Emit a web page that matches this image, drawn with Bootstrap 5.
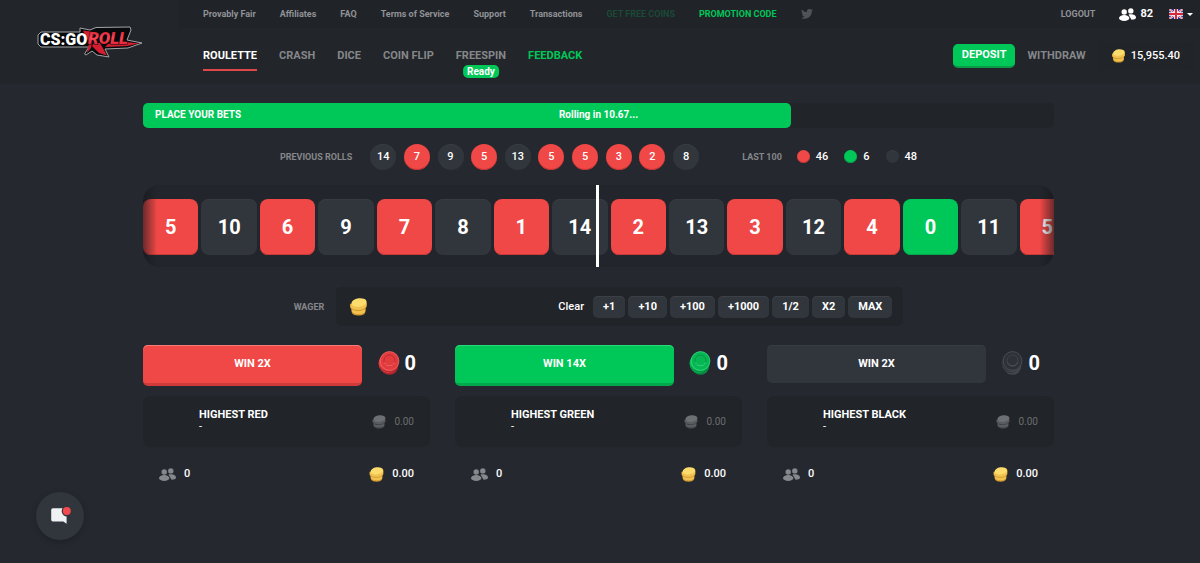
<!DOCTYPE html>
<html lang="en">
<head>
<meta charset="utf-8">
<meta name="viewport" content="width=device-width, initial-scale=1">
<title>CS:GO Roll - Roulette</title>
<link href="https://cdn.jsdelivr.net/npm/bootstrap@5.3.0/dist/css/bootstrap.min.css" rel="stylesheet">
<style>
:root { --red: #ef4846; --red-edge: #c23434; --green: #00c858; --green-edge: #0a9a48; --slate: #31363c; --panel: #212428; --muted: #909296; }
body { font-family: Roboto, "Liberation Sans", sans-serif; font-size: 11px; line-height: 16px; color: #fff; background: #25282f; min-height: 100vh; }
a { color: inherit; text-decoration: none; }
svg { display: block; flex: none; }
.site-header { background: #222529; height: 84px; }
.logo-box { width: 178px; padding-left: 36px; padding-top: 23px; }
.top-links { background: #202328; height: 28px; padding: 0 7px 0 25px; font-size: 9px; font-weight: 700; color: var(--muted); }
.top-row { gap: 24px; }
.game-row { gap: 22px; }
.faded { color: #1a4a36; }
.promo { color: var(--green); }
.online { font-size: 11px; }
.main-links { height: 56px; padding: 0 6px 0 25px; font-weight: 700; color: #85878a; }
.main-links .current { color: #fff; }
.main-links .current::after { content: ""; position: absolute; left: 0; right: 0; top: 21px; height: 2px; background: #e0474a; }
.ready { top: 17px; left: 50%; transform: translateX(-50%); background: var(--green); color: #fff; border-radius: 5px; font-size: 10px; line-height: 13px; padding: 0 4px; font-weight: 700; }
.deposit { background: var(--green); border: 0; border-bottom: 2px solid var(--green-edge); border-radius: 5px; color: #fff; font-size: 11px; font-weight: 700; line-height: 22px; padding: 0 9px; }
.withdraw { margin: 0 12px; }
.balance { background: var(--panel); border-radius: 4px; padding: 0 14px; height: 28px; gap: 6px; font-weight: 500; color: #fff; }
.lang { border: 0; background: none; padding: 0; color: #fff; gap: 4px; }
.caret { border: 3px solid transparent; border-top-color: #fff; border-bottom: 0; }
main { padding: 19px 146px 24px 143px; }
.timer { height: 25px; border-radius: 5px; background: var(--panel); font-size: 10px; font-weight: 700; }
.timer-fill { height: 100%; border-radius: 5px; background: var(--green); }
.timer-text { inset: 0; line-height: 24px; }
.cap { font-size: 9px; font-weight: 700; color: #85878a; }
.history { margin-top: 15px; height: 27px; }
.rolls { width: 329px; margin: 0 43px 0 18px; }
.ball { width: 26px; height: 26px; line-height: 26px; border-radius: 50%; text-align: center; font-size: 11px; font-weight: 500; }
.dot { width: 13px; height: 13px; border-radius: 50%; }
.bg-r { background: var(--red); box-shadow: inset 0 -1px var(--red-edge); }
.bg-g { background: var(--green); box-shadow: inset 0 -1px var(--green-edge); }
.bg-k { background: var(--slate); box-shadow: inset 0 1px #373c42; }
.totals { gap: 16px; font-weight: 500; margin-left: 15px; }
.totals span { gap: 6px; }
.wheel { margin-top: 15px; height: 82px; }
.wheel-window { height: 100%; border-radius: 16px; background: #22252b; padding: 14px 0; overflow: hidden; }
.wheel-window::after { content: ""; position: absolute; inset: 0; border-radius: 16px; background: linear-gradient(90deg, rgba(20,22,26,.6), transparent 14px, transparent calc(100% - 14px), rgba(20,22,26,.6)); }
.tiles { gap: 3px; margin-right: -21px; height: 56px; }
.tile { flex: 1 1 0; border-radius: 8px; font-size: 20px; font-weight: 700; }
.tile.bg-r { box-shadow: inset 0 -1px #c93a39; }
.tile.bg-g { box-shadow: inset 0 -1px #03a64b; }
.needle { left: 50%; top: 0; bottom: 0; width: 3px; margin-left: -3px; background: #fff; }
.wager { margin-top: 20px; gap: 12px; }
.wager-box { width: 567px; height: 39px; background: var(--panel); border-radius: 5px; padding: 0 11px 0 14px; gap: 3px; }
.wager-box input { min-width: 0; flex: 1 1 0; background: none; border: 0; color: #fff; outline: 0; }
.wager-box button { border: 0; border-radius: 5px; background: var(--slate); box-shadow: inset 0 1px #3b4046; color: #fff; font-size: 11px; font-weight: 700; line-height: 22px; padding: 0 10px; }
.wager-box .clear { background: none; box-shadow: none; font-weight: 500; padding: 0; margin-right: 6px; }
.bets { --bs-gutter-x: 25px; margin-top: 19px; }
.bet-head { height: 41px; }
.bet-head button { width: 219px; border: 0; border-radius: 5px; color: #fff; font-weight: 700; font-size: 11px; line-height: 38px; padding: 0; }
.bet-head .bg-r { border-bottom: 3px solid #cf3b3b; box-shadow: inset 0 1px #f77b76; }
.bet-head .bg-g { border-bottom: 3px solid #03a84c; box-shadow: inset 0 1px #2ada7a; }
.chips { padding: 0 14px 6px 0; gap: 5px; font-size: 20px; font-weight: 700; }
.highest { margin-top: 10px; height: 51px; background: var(--panel); border-radius: 8px; padding: 0 16px 0 56px; }
.highest h2 { font-size: 11px; line-height: 13px; font-weight: 700; margin: 0; }
.highest p { line-height: 11px; margin: 0; }
.highest-name { padding-top: 12px; }
.dim { color: #6a6d70; font-size: 10px; gap: 8px; }
.sums { margin-top: 18px; padding: 0 16px; height: 18px; font-weight: 500; }
.sums span { gap: 8px; }
.chat { left: 36px; bottom: 23px; width: 48px; height: 48px; border: 0; border-radius: 50%; background: var(--slate); box-shadow: 0 2px 6px rgba(0,0,0,.2); padding: 0; }
.gold { --c1: #fbdc6c; --c2: #f2c24e; --c3: #cf9730; }
.grey { --c1: #6d7073; --c2: #595c60; --c3: #404347; }
.chip-r { --c1: #f66a68; --c2: #e23c3f; --c3: #b0262d; }
.chip-g { --c1: #35de83; --c2: #06b854; --c3: #068840; }
.chip-k { --c1: #50555b; --c2: #2e3238; --c3: #43484e; }
</style>
</head>
<body>
<svg width="0" height="0" class="position-absolute" aria-hidden="true">
  <defs>
    <symbol id="coins" viewBox="0 0 16 17">
      <path d="M1.500 10v3c0 2 2.600 3.600 6.500 3.600s6.500-1.600 6.500-3.600v-3z" fill="var(--c3)"/>
      <path d="M1.500 9v3.300C2 14 4.500 15.300 8 15.300s6-1.300 6.500-3V9z" fill="var(--c2)"/>
      <path d="M.3 6v3c.6 1.900 3.500 3.200 7.200 3.200 3.900 0 7-1.200 8-3.700V4.500z" fill="var(--c3)"/>
      <path d="M.3 5.500v2.800c.6 1.800 3.500 3 7.200 3 3.900 0 7-1.200 8.200-3.700V4z" fill="var(--c2)"/>
      <ellipse cx="8.500" cy="4.300" rx="7.200" ry="4" fill="var(--c1)" transform="rotate(-8 8.500 4.300)"/>
    </symbol>
    <symbol id="chip" viewBox="0 0 22 24">
      <circle cx="11.500" cy="15" r="8.800" fill="var(--c3)"/>
      <circle cx="10" cy="12.500" r="9.500" fill="var(--c2)"/>
      <path d="M1.500 15.500c3 6 13 7 18 1" fill="none" stroke="var(--c3)"/>
      <circle cx="11.500" cy="10" r="9.400" fill="var(--c2)" stroke="var(--c1)" stroke-width=".8"/>
      <circle cx="11.500" cy="9.500" r="5.500" fill="none" stroke="var(--c3)" stroke-width=".8"/>
      <path d="M6.500 11.500c1.500 4.500 8.500 4.500 10 0" fill="none" stroke="var(--c1)"/>
    </symbol>
    <symbol id="people" viewBox="0 0 17 13">
      <circle cx="11.800" cy="2.900" r="2.700"/><path d="M9.500 6.500c3-1 7.500 0 7.500 3 0 1.800-2 2.200-4.500 2.200z"/>
      <circle cx="5.200" cy="4" r="2.700"/><ellipse cx="5.200" cy="10" rx="5.200" ry="3"/>
    </symbol>
  </defs>
</svg>

<header class="site-header d-flex">
  <a class="logo-box flex-shrink-0" href="#" aria-label="CS:GO Roll">
    <svg width="108" height="38" viewBox="0 0 108 38">
      <defs><linearGradient id="blade" x1="0" y1="0" x2="0" y2="1"><stop offset="0" stop-color="#c9192a"/><stop offset=".5" stop-color="#fb4456"/><stop offset="1" stop-color="#cf1625"/></linearGradient></defs>
      <path d="M5 9H44V5L54 7L60 4.500L94 4L95 7L91 17L106 20L92 25L69 26L73 34L61 32L56 28L50 32L48.500 31L53 24L5 24L2 21V12Z" fill="#08090b" stroke="#a2a5a8" stroke-linejoin="round"/>
      <path d="M47 7.500L58 9L55 25L51 30L53 20ZM58 20L64 20L71 32.500L63 30L56 23ZM86 18.500L103 20.500L91 23L69 24L72 21Z" fill="#d31d30"/>
      <text x="4" y="22" font-family="Roboto, sans-serif" font-size="16" font-weight="900" fill="#fff">CS:GO</text>
      <text x="52" y="21" font-family="Roboto, sans-serif" font-size="17" font-weight="900" font-style="italic" fill="url(#blade)" stroke="#08090b" stroke-width="1" paint-order="stroke">ROLL</text>
    </svg>
  </a>
  <div class="flex-grow-1">
    <nav class="top-links d-flex align-items-center justify-content-between" aria-label="Site">
      <div class="top-row d-flex align-items-center">
        <a href="#">Provably Fair</a><a href="#">Affiliates</a><a href="#">FAQ</a><a href="#">Terms of Service</a><a href="#">Support</a><a href="#">Transactions</a><a href="#" class="faded">GET FREE COINS</a><a href="#" class="promo">PROMOTION CODE</a>
        <a href="#" aria-label="Twitter"><svg width="12" height="10" viewBox="0 0 24 20" fill="#4f5257"><path d="M24 2.400c-.9.400-1.800.7-2.800.8 1-.6 1.800-1.600 2.200-2.700-1 .6-2 1-3.100 1.200A4.900 4.900 0 0 0 11.900 6.200C7.700 6 4.100 4 1.700.9 0 3.500.9 6 3.200 7.500c-.8 0-1.600-.2-2.200-.6 0 2.300 1.600 4.400 3.900 4.900-.7.200-1.500.2-2.200.1.600 2 2.400 3.400 4.600 3.400A9.900 9.900 0 0 1 0 17.300 14 14 0 0 0 21.500 4.900c1-.7 1.800-1.600 2.500-2.500z"/></svg></a>
      </div>
      <div class="d-flex align-items-center">
        <a href="#" class="me-4">LOGOUT</a>
        <span class="d-flex align-items-center text-white gap-1 me-3"><svg width="17" height="13" fill="#fff"><use href="#people"/></svg><span class="online">82</span></span>
        <button class="lang d-flex align-items-center" type="button" aria-label="Language: English"><svg width="14" height="10" viewBox="0 0 14 10"><path fill="#26348b" d="M0 0h14v10H0z"/><path d="M0 0l14 10M14 0L0 10" stroke="#fff" stroke-width="2"/><path d="M0 0l14 10M14 0L0 10" stroke="#d8283f" stroke-width=".8"/><path d="M7 0v10M0 5h14" stroke="#fff" stroke-width="3.600"/><path d="M7 0v10M0 5h14" stroke="#d8283f" stroke-width="2"/></svg><span class="caret"></span></button>
      </div>
    </nav>
    <nav class="main-links d-flex align-items-center justify-content-between" aria-label="Games">
      <div class="game-row d-flex">
        <a href="#" class="current position-relative">ROULETTE</a><a href="#">CRASH</a><a href="#">DICE</a><a href="#">COIN FLIP</a><a href="#" class="position-relative">FREESPIN<span class="ready position-absolute">Ready</span></a><a href="#" class="promo">FEEDBACK</a>
      </div>
      <div class="d-flex align-items-center">
        <button class="deposit" type="button">DEPOSIT</button>
        <a href="#" class="withdraw">WITHDRAW</a>
        <span class="balance d-flex align-items-center"><svg class="gold" width="13" height="14"><use href="#coins"/></svg>15,955.40</span>
      </div>
    </nav>
  </div>
</header>

<main>
  <div class="timer position-relative" role="timer">
    <div class="timer-fill" style="width:71.100%"></div>
    <div class="timer-text position-absolute text-center"><span class="position-absolute start-0 ms-1 ps-2">PLACE YOUR BETS</span>Rolling in 10.67...</div>
  </div>

  <section class="history d-flex align-items-center justify-content-center" aria-label="History">
    <span class="cap">PREVIOUS ROLLS</span>
    <div class="rolls d-flex justify-content-between">
      <span class="ball bg-k">14</span><span class="ball bg-r">7</span><span class="ball bg-k">9</span><span class="ball bg-r">5</span><span class="ball bg-k">13</span><span class="ball bg-r">5</span><span class="ball bg-r">5</span><span class="ball bg-r">3</span><span class="ball bg-r">2</span><span class="ball bg-k">8</span>
    </div>
    <span class="cap">LAST 100</span>
    <div class="totals d-flex">
      <span class="d-flex align-items-center"><i class="dot bg-r"></i>46</span><span class="d-flex align-items-center"><i class="dot bg-g"></i>6</span><span class="d-flex align-items-center"><i class="dot bg-k"></i>48</span>
    </div>
  </section>

  <section class="wheel position-relative" aria-label="Wheel">
    <div class="wheel-window position-relative">
      <div class="tiles d-flex">
        <div class="tile bg-r d-flex align-items-center justify-content-center">5</div>
        <div class="tile bg-k d-flex align-items-center justify-content-center">10</div>
        <div class="tile bg-r d-flex align-items-center justify-content-center">6</div>
        <div class="tile bg-k d-flex align-items-center justify-content-center">9</div>
        <div class="tile bg-r d-flex align-items-center justify-content-center">7</div>
        <div class="tile bg-k d-flex align-items-center justify-content-center">8</div>
        <div class="tile bg-r d-flex align-items-center justify-content-center">1</div>
        <div class="tile bg-k d-flex align-items-center justify-content-center">14</div>
        <div class="tile bg-r d-flex align-items-center justify-content-center">2</div>
        <div class="tile bg-k d-flex align-items-center justify-content-center">13</div>
        <div class="tile bg-r d-flex align-items-center justify-content-center">3</div>
        <div class="tile bg-k d-flex align-items-center justify-content-center">12</div>
        <div class="tile bg-r d-flex align-items-center justify-content-center">4</div>
        <div class="tile bg-g d-flex align-items-center justify-content-center">0</div>
        <div class="tile bg-k d-flex align-items-center justify-content-center">11</div>
        <div class="tile bg-r d-flex align-items-center justify-content-center">5</div>
      </div>
    </div>
    <div class="needle position-absolute"></div>
  </section>

  <form class="wager d-flex align-items-center justify-content-center">
    <label class="cap" for="wager">WAGER</label>
    <div class="wager-box d-flex align-items-center">
      <svg class="gold" width="17" height="18"><use href="#coins"/></svg>
      <input id="wager" type="text" inputmode="decimal">
      <button type="button" class="clear">Clear</button>
      <button type="button">+1</button><button type="button">+10</button><button type="button">+100</button><button type="button">+1000</button><button type="button">1/2</button><button type="button">X2</button><button type="button">MAX</button>
    </div>
  </form>

  <div class="bets row">
    <section class="col-4">
      <div class="bet-head d-flex justify-content-between align-items-start">
        <button type="button" class="bg-r">WIN 2X</button>
        <div class="chips d-flex align-items-center h-100"><svg class="chip-r" width="22" height="24"><use href="#chip"/></svg>0</div>
      </div>
      <div class="highest d-flex justify-content-between">
        <div class="highest-name"><h2>HIGHEST RED</h2><p>-</p></div>
        <span class="dim d-flex align-items-center"><svg class="grey" width="14" height="14"><use href="#coins"/></svg>0.00</span>
      </div>
      <div class="sums d-flex justify-content-between">
        <span class="d-flex align-items-center"><svg width="17" height="13" fill="#85888c"><use href="#people"/></svg>0</span>
        <span class="d-flex align-items-center"><svg class="gold" width="15" height="15"><use href="#coins"/></svg>0.00</span>
      </div>
    </section>
    <section class="col-4">
      <div class="bet-head d-flex justify-content-between align-items-start">
        <button type="button" class="bg-g">WIN 14X</button>
        <div class="chips d-flex align-items-center h-100"><svg class="chip-g" width="22" height="24"><use href="#chip"/></svg>0</div>
      </div>
      <div class="highest d-flex justify-content-between">
        <div class="highest-name"><h2>HIGHEST GREEN</h2><p>-</p></div>
        <span class="dim d-flex align-items-center"><svg class="grey" width="14" height="14"><use href="#coins"/></svg>0.00</span>
      </div>
      <div class="sums d-flex justify-content-between">
        <span class="d-flex align-items-center"><svg width="17" height="13" fill="#85888c"><use href="#people"/></svg>0</span>
        <span class="d-flex align-items-center"><svg class="gold" width="15" height="15"><use href="#coins"/></svg>0.00</span>
      </div>
    </section>
    <section class="col-4">
      <div class="bet-head d-flex justify-content-between align-items-start">
        <button type="button" class="bg-k">WIN 2X</button>
        <div class="chips d-flex align-items-center h-100"><svg class="chip-k" width="22" height="24"><use href="#chip"/></svg>0</div>
      </div>
      <div class="highest d-flex justify-content-between">
        <div class="highest-name"><h2>HIGHEST BLACK</h2><p>-</p></div>
        <span class="dim d-flex align-items-center"><svg class="grey" width="14" height="14"><use href="#coins"/></svg>0.00</span>
      </div>
      <div class="sums d-flex justify-content-between">
        <span class="d-flex align-items-center"><svg width="17" height="13" fill="#85888c"><use href="#people"/></svg>0</span>
        <span class="d-flex align-items-center"><svg class="gold" width="15" height="15"><use href="#coins"/></svg>0.00</span>
      </div>
    </section>
  </div>
</main>

<button class="chat position-fixed d-flex align-items-center justify-content-center" type="button" aria-label="Open chat">
  <svg width="22" height="20" viewBox="0 0 20 18"><path d="M3.500 2H16v14l-3-2H3.500Q2 14 2 12.500v-9Q2 2 3.500 2z" fill="#f0f1f2"/><circle cx="16.500" cy="4.500" r="5" fill="#31363c"/><circle cx="16.200" cy="4.500" r="3.600" fill="#f24a4e"/></svg>
</button>
<script src="https://cdn.jsdelivr.net/npm/bootstrap@5.3.0/dist/js/bootstrap.bundle.min.js"></script>
</body>
</html>
